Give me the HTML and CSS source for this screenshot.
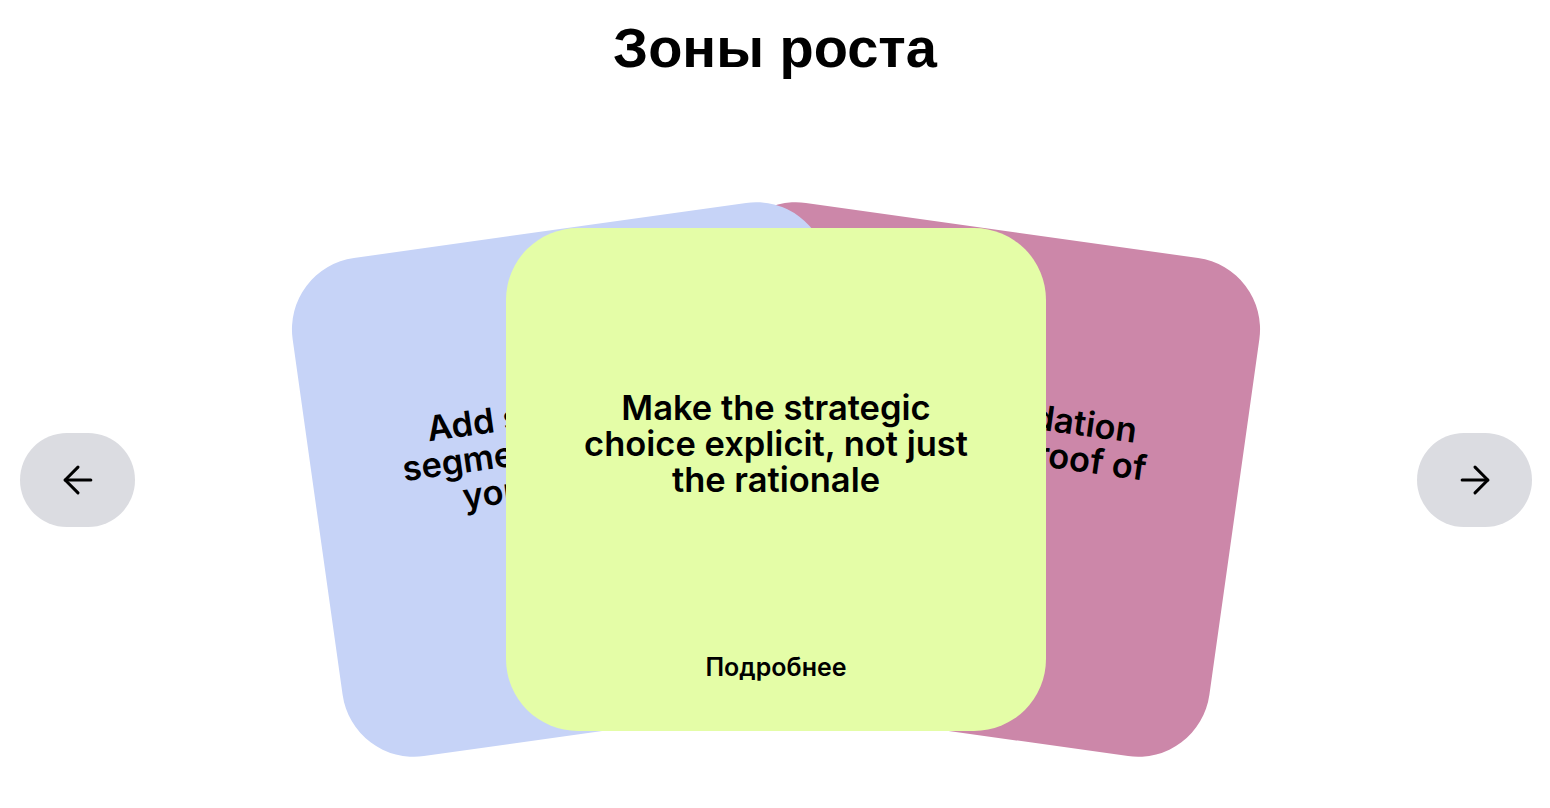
FILE: index.html
```html
<!DOCTYPE html>
<html lang="ru">
<head>
  <meta charset="UTF-8">
  <title>Зоны роста</title>
  <link rel="stylesheet" href="styles.css">
</head>
<body>
  <h1 class="page-title">Зоны роста</h1>

  <section class="stage">
    <button class="nav-btn" aria-label="Назад">
      <svg width="44" height="44" viewBox="0 0 24 24" fill="none" stroke="currentColor" stroke-width="1.65" stroke-linecap="round" stroke-linejoin="round">
        <path d="M19 12H5"/>
        <path d="m12 19-7-7 7-7"/>
      </svg>
    </button>

    <div class="deck">
      <article class="card card--pink card--right">
        <p class="card-text">Get early validation with product proof of demand</p>
        <a class="card-more" href="#">Подробнее</a>
      </article>
      <article class="card card--blue card--left">
        <p class="card-text">Add smaller client segments adjacent to your core offer</p>
        <a class="card-more" href="#">Подробнее</a>
      </article>
      <article class="card card--lime card--active">
        <p class="card-text">Make the strategic choice explicit, not just the rationale</p>
        <a class="card-more" href="#">Подробнее</a>
      </article>
    </div>

    <button class="nav-btn" aria-label="Вперёд">
      <svg width="44" height="44" viewBox="0 0 24 24" fill="none" stroke="currentColor" stroke-width="1.65" stroke-linecap="round" stroke-linejoin="round">
        <path d="M5 12h14"/>
        <path d="m12 5 7 7-7 7"/>
      </svg>
    </button>
  </section>
</body>
</html>
```

FILE: styles.css
```css
body {
  margin: 0;
  min-height: 100vh;
  background: #ffffff;
  color: #000000;
  font-family: 'Inter', 'Noto Sans', sans-serif;
}
.page-title {
  margin: 0;
  padding-top: 16px;
  font-family: 'Liberation Sans', Arial, sans-serif;
  font-size: 56px;
  line-height: 64px;
  font-weight: 700;
  text-align: center;
}
.stage {
  display: flex;
  align-items: center;
  justify-content: space-between;
  padding: 0 18px 77px 20px;
  margin-top: 148px;
}
.nav-btn {
  width: 115px;
  height: 94px;
  border: none;
  border-radius: 47px;
  background: #dbdce1;
  color: #000000;
  display: flex;
  align-items: center;
  justify-content: center;
  padding: 0;
  cursor: pointer;
}
.deck {
  display: grid;
  width: 540px;
  height: 503px;
}
.card {
  grid-area: 1 / 1;
  position: relative;
  z-index: 1;
  display: flex;
  flex-direction: column;
  align-items: center;
  padding: 162px 70px 52px;
  border-radius: 72px;
  box-sizing: border-box;
  text-align: center;
}
.card--lime {
  background: #e4fda7;
}
.card--blue {
  background: #c6d3f7;
}
.card--pink {
  background: #cc87a9;
}
.card--left {
  transform: translateX(-191px) rotate(-8deg);
}
.card--right {
  transform: translateX(191px) rotate(8deg);
}
.card--active {
  z-index: 3;
}
.card-text {
  margin: 0;
  font-size: 34.5px;
  line-height: 36px;
  font-weight: 600;
}
.card-more {
  margin-top: auto;
  font-size: 25px;
  line-height: 24px;
  font-weight: 600;
  color: #000000;
  text-decoration: none;
}
```
